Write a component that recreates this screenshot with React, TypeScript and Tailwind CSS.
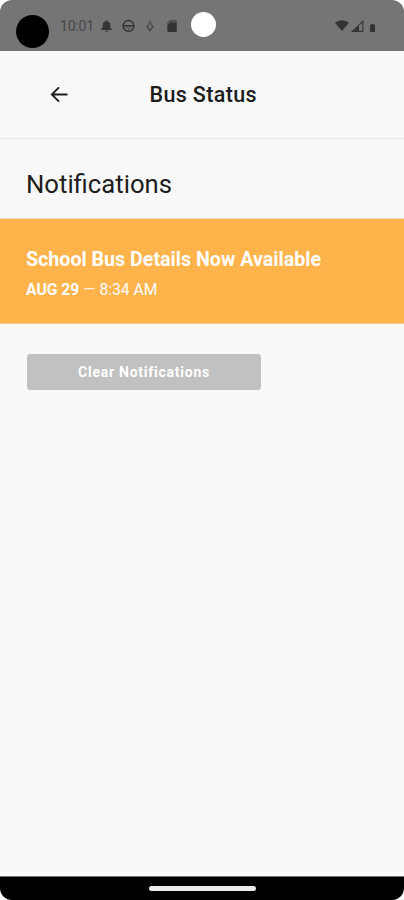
const StatusBar = () => {
  return (
    <header className="flex h-[51px] shrink-0 items-start bg-[#757575] text-[#343434]">
      <div className="mt-[15px] ml-4 size-[33px] rounded-full bg-black" />
      <span className="mt-[17px] ml-[11px] w-[35px] text-[14px] leading-[19px] tracking-[-0.2px] whitespace-nowrap text-[#484848]">
        10:01
      </span>
      <svg className="mt-5 ml-[6px] h-3 w-[11px]" viewBox="0 0 10 12" preserveAspectRatio="none" fill="currentColor">
        <path d="M5 0.2a1 1 0 0 1 1 1v.3C7.6 1.9 8.5 3.3 8.5 5v2.9L10 9.3v.7H0v-.7l1.5-1.4V5c0-1.7.9-3.1 2.5-3.5v-.3a1 1 0 0 1 1-1ZM3.7 10.6h2.6a1.3 1.3 0 0 1-2.6 0Z" />
      </svg>
      <svg
        className="mt-[19px] ml-[10px] h-[14px] w-[13px]"
        viewBox="0 0 13 14"
        fill="none"
        stroke="currentColor"
      >
        <circle cx="6.5" cy="7" r="5.4" strokeWidth="1.5" />
        <path d="M1.5 6.7h10" strokeWidth="1.4" />
        <path d="M3.8 7.2l1 1.7h3.4l1-1.7M6.5 9v3" strokeWidth="1" strokeOpacity="0.45" />
      </svg>
      <svg
        className="mt-5 ml-[11px] h-3 w-2 text-[#434343]"
        viewBox="0 0 8 12"
        fill="none"
        stroke="currentColor"
      >
        <path d="M4 0.3v4.2M2.9 2.6v2M5.1 2.6v2" strokeWidth="0.8" />
        <path d="M2.6 5 1 6.8l3 3.2 3-3.2L5.4 5" strokeWidth="1.2" />
        <path d="M2.8 10 4 11.3 5.2 10" strokeWidth="0.8" />
      </svg>
      <svg className="mt-5 ml-[13px] h-3 w-[10px]" viewBox="0 0 10 12" fill="currentColor">
        <path d="M3 0.3h6.8v1.1H3.6L0.3 4.2V3Z" opacity="0.85" />
        <path d="M0.3 4.8 3.6 2.2H9.8V11a1 1 0 0 1-1 1H1.3a1 1 0 0 1-1-1Z" />
      </svg>
      <div className="mt-[11.5px] ml-[13.5px] size-[25px] rounded-full bg-white" />
      <svg className="mt-5 ml-[119px] h-[11px] w-[14px]" viewBox="0 0 14 11" fill="currentColor">
        <path d="M0 2.7C4-.7 10-.7 14 2.7L7 11Z" />
      </svg>
      <svg className="mt-5 ml-[2px] h-3 w-[13px]" viewBox="0 0 13 12" fill="currentColor">
        <path d="M0 12 8 4.6V12Z" />
        <path d="M8 4.8 11.9 1.3v10.1H8" fill="none" stroke="currentColor" strokeWidth="1.1" />
      </svg>
      <svg className="mt-6 ml-[6px] h-2 w-[5px]" viewBox="0 0 5 8" fill="currentColor">
        <path d="M0 .8h1.3V0h2.4v.8H5V8H0Z" />
      </svg>
    </header>
  );
};

const NotificationCard = ({ title, date, time }: { title: string; date: string; time: string }) => {
  return (
    <article className="h-[106px] border-t border-b border-t-[#ecdcc4] border-b-[#f0c88c] bg-[#ffb34b] px-[26px] pt-7 text-white">
      <h3 className="text-[19.65px] leading-[25px] font-bold whitespace-nowrap">{title}</h3>
      <p className="mt-[9px] text-[15.7px] leading-[18px] whitespace-nowrap">
        <strong className="font-bold">{date}</strong>{" "}
        <span className="opacity-80">—</span> {time}
      </p>
    </article>
  );
};

export default function App() {
  return (
    <div className="h-[900px] w-[404px] bg-white font-[Roboto,sans-serif]">
      <div className="flex h-full flex-col overflow-hidden rounded-[12px] bg-[#f8f8f8]">
        <StatusBar />
        <nav className="flex h-22 shrink-0 items-center border-b border-[#e8e8e8]">
          <svg
            className="ml-[50px] h-4 w-[18px] text-[#1c1c1c]"
            viewBox="0 0 18 16"
            fill="none"
            stroke="currentColor"
            strokeWidth="1.8"
          >
            <path d="M17.5 7.5H2M9 0.3 1.8 7.5 9 14.7" />
          </svg>
          <h1 className="ml-[81.5px] text-[21.5px] leading-7 font-medium tracking-[0.35px] text-[#1c1c1c]">
            Bus Status
          </h1>
        </nav>
        <main className="flex-1">
          <h2 className="flex h-[79px] items-center pt-[11px] pl-[26px] text-[25.7px] leading-8 text-[#1c1c1c]">
            Notifications
          </h2>
          <NotificationCard title="School Bus Details Now Available" date="AUG 29" time="8:34 AM" />
          <button className="mt-[30px] ml-[27px] flex h-9 w-[234px] items-center justify-center rounded-[3px] bg-[#c1c1c1] text-[14px] font-bold tracking-[0.75px] text-white">
            Clear Notifications
          </button>
        </main>
        <footer className="flex h-7 shrink-0 flex-col items-center border-t-4 border-white bg-black">
          <div className="h-px w-full bg-[#707070]" />
          <div className="mt-[9px] h-[5px] w-[107px] rounded-full bg-[#ececec]" />
        </footer>
      </div>
    </div>
  );
}
